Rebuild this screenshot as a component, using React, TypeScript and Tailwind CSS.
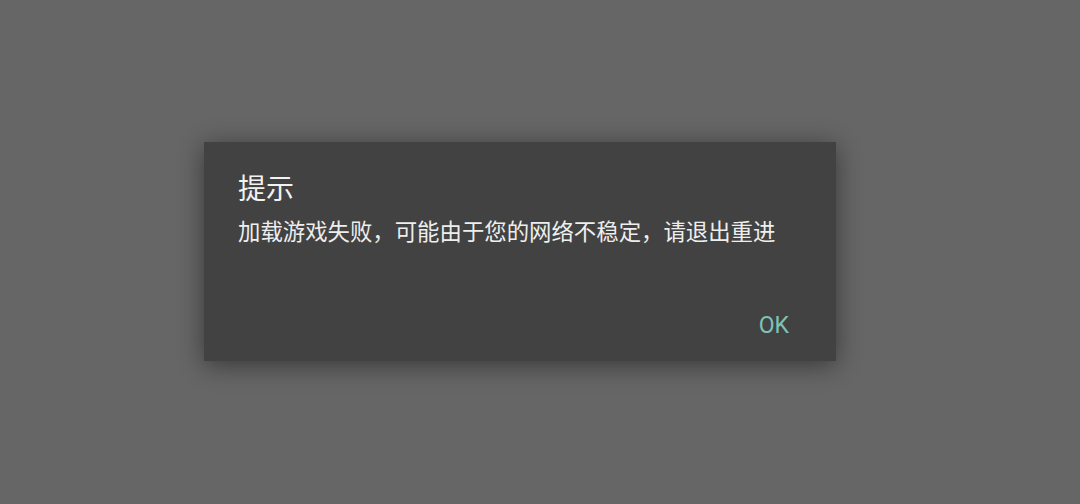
import React from 'react';

const font = { fontFamily: '"Roboto", "Noto Sans CJK SC", sans-serif' };

const AlertDialog: React.FC<{ title: string; message: string; action: string }> = ({ title, message, action }) => (
  <div className="flex h-[219px] w-[632px] flex-col bg-[#424242] pl-[34px] pr-[47px] pt-[30px] shadow-[0_4px_24px_rgba(0,0,0,0.45)]">
    <h2 className="text-[28px] leading-[36px] text-[#f2f2f2]">{title}</h2>
    <p className="mt-[9px] text-[22.4px] leading-[30px] text-[#eeeeee]">{message}</p>
    <div className="mt-auto mb-[20px] flex justify-end">
      <button className="text-[23px] leading-[30px] text-[#7fc2b9]">{action}</button>
    </div>
  </div>
);

export default function App() {
  return (
    <div className="flex h-[504px] w-[1080px] items-start bg-[#666666] pl-[204px] pt-[142px]" style={font}>
      <AlertDialog title="提示" message="加载游戏失败，可能由于您的网络不稳定，请退出重进" action="OK" />
    </div>
  );
}
